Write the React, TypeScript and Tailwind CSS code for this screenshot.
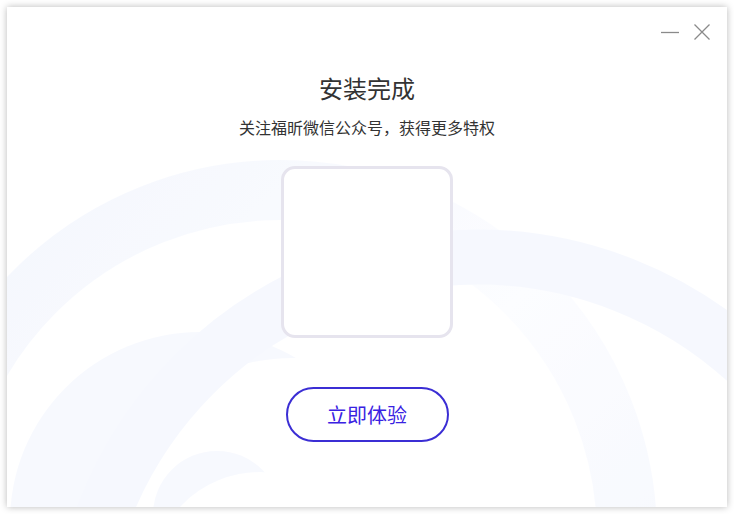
import React from "react";

const font = { fontFamily: '"Noto Sans CJK SC", "Noto Sans", sans-serif' };

// faint decorative rings behind the content
const Backdrop: React.FC = () => (
  <svg
    className="absolute inset-0 pointer-events-none"
    width="720"
    height="500"
    viewBox="0 0 720 500"
    opacity="0.6"
  >
    <defs>
      <linearGradient id="ringFade" x1="0" y1="0" x2="1" y2="1">
        <stop offset="0" stopColor="#edf2fd" />
        <stop offset="0.5" stopColor="#fbfcff" />
        <stop offset="1" stopColor="#ecf1fd" />
      </linearGradient>
    </defs>
    <circle cx="193" cy="515" r="190" fill="#f3f6fe" />
    <circle cx="286" cy="551" r="200" fill="#ffffff" />
    <circle cx="210" cy="508" r="64" fill="#f3f6fe" />
    <circle cx="253" cy="574" r="109" fill="#ffffff" />
    <circle cx="273" cy="530" r="347" fill="none" stroke="url(#ringFade)" strokeWidth="60" />
    <circle cx="470" cy="650" r="400" fill="none" stroke="#f1f5fe" strokeWidth="55" />
  </svg>
);

const WindowControls: React.FC = () => (
  <div className="absolute top-[14px] right-[14px] flex items-center gap-[10px]">
    <button className="w-[22px] h-[22px] flex items-center justify-center">
      <svg width="20" height="20" viewBox="0 0 20 20">
        <line x1="1" y1="10.5" x2="19" y2="10.5" stroke="#8a8a8a" strokeWidth="1.3" />
      </svg>
    </button>
    <button className="w-[22px] h-[22px] flex items-center justify-center">
      <svg width="18" height="18" viewBox="0 0 18 18">
        <path d="M1.5 1.5 L16.5 16.5 M16.5 1.5 L1.5 16.5" stroke="#8a8a8a" strokeWidth="1.3" />
      </svg>
    </button>
  </div>
);

export default function App() {
  return (
    <div className="w-[734px] h-[514px] bg-white p-[7px]" style={font}>
      <div className="relative w-[720px] h-[500px] bg-white overflow-hidden shadow-[0_0_7px_rgba(0,0,0,0.28)]">
        <Backdrop />
        <WindowControls />

        <div className="relative flex flex-col items-center pt-[66px]">
          <h1 className="text-[24px] leading-[30px] text-[#333333]">安装完成</h1>
          <p className="mt-[14px] text-[16px] leading-[20px] text-[#333333]">
            关注福昕微信公众号，获得更多特权
          </p>

          {/* QR placeholder */}
          <div className="mt-[29px] w-[172px] h-[172px] rounded-[14px] border-[3px] border-[#e6e4ee] bg-white" />

          <button className="mt-[49px] w-[163px] h-[55px] rounded-full border-2 border-[#3b2ed4] bg-white text-[20px] text-[#3a22e2]">
            立即体验
          </button>
        </div>
      </div>
    </div>
  );
}
